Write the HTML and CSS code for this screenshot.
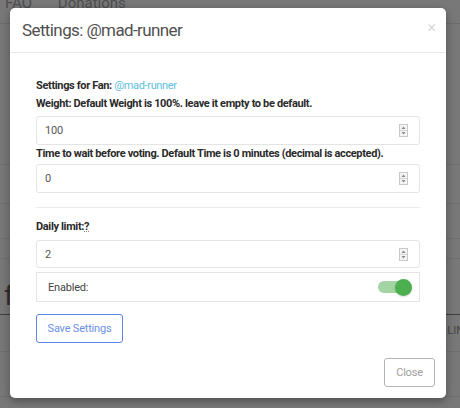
FILE: index.html
```html
<!doctype html>
<html>
<head>
	<title>Settings</title>
	<link rel="stylesheet" href="styles.css">
</head>
<body>

	<div class="page">
		<div class="nav">
			<span>FAQ</span>
			<span>Donations</span>
		</div>
		<div class="row r1"></div>
		<div class="row r2"></div>
		<div class="row r3"></div>
		<div class="row r4"></div>
		<div class="row r5"><span class="big">f</span></div>
		<div class="row r6"><span class="side">Y LIN</span></div>
		<div class="row r7"></div>
	</div>

	<div class="modal">
		<div class="modal-header">
			<h4 class="modal-title">Settings: @mad-runner</h4>
			<span class="close">&times;</span>
		</div>

		<div class="modal-body">
			<div class="lbl">Settings for Fan: <a class="fan" href="#">@mad-runner</a></div>
			<div class="lbl">Weight: Default Weight is 100%. leave it empty to be default.</div>
			<div class="field f1">
				<input type="text" value="100">
				<svg class="spin" width="9" height="13" viewBox="0 0 9 13">
					<rect x="0.5" y="0.5" width="8" height="12" fill="#f4f4f4" stroke="#c9c9c9"/>
					<line x1="1" y1="6.5" x2="8" y2="6.5" stroke="#d6d6d6"/>
					<path d="M4.5 2.5 L6.5 5 L2.5 5 Z" fill="#8a8a8a"/>
					<path d="M4.5 10.5 L6.5 8 L2.5 8 Z" fill="#8a8a8a"/>
				</svg>
			</div>
			<div class="lbl">Time to wait before voting. Default Time is 0 minutes (decimal is accepted).</div>
			<div class="field f2">
				<input type="text" value="0">
				<svg class="spin" width="9" height="13" viewBox="0 0 9 13">
					<rect x="0.5" y="0.5" width="8" height="12" fill="#f4f4f4" stroke="#c9c9c9"/>
					<line x1="1" y1="6.5" x2="8" y2="6.5" stroke="#d6d6d6"/>
					<path d="M4.5 2.5 L6.5 5 L2.5 5 Z" fill="#8a8a8a"/>
					<path d="M4.5 10.5 L6.5 8 L2.5 8 Z" fill="#8a8a8a"/>
				</svg>
			</div>

			<hr class="sep">

			<div class="lbl daily">Daily limit:<abbr title="How many votes per day">?</abbr></div>
			<div class="field f3">
				<input type="text" value="2">
				<svg class="spin" width="9" height="13" viewBox="0 0 9 13">
					<rect x="0.5" y="0.5" width="8" height="12" fill="#f4f4f4" stroke="#c9c9c9"/>
					<line x1="1" y1="6.5" x2="8" y2="6.5" stroke="#d6d6d6"/>
					<path d="M4.5 2.5 L6.5 5 L2.5 5 Z" fill="#8a8a8a"/>
					<path d="M4.5 10.5 L6.5 8 L2.5 8 Z" fill="#8a8a8a"/>
				</svg>
			</div>
			<div class="toggle-row">
				<span>Enabled:</span>
				<span class="switch"><span class="knob"></span></span>
			</div>

			<button class="btn-save">Save Settings</button>
		</div>

		<div class="modal-footer">
			<button class="btn-close">Close</button>
		</div>
	</div>

</body>
</html>
```

FILE: styles.css
```css
html, body {margin: 0; padding: 0;}
body {font-family: Roboto, "Liberation Sans", Arial, sans-serif; background: #787878; height: 408px; overflow: hidden;}

/* page behind the overlay */
.page {color: #4e4e4e;}
.nav {height: 27px; border-bottom: 1px solid #6c6c6c; font-size: 15px; line-height: 14px; margin-top: -4px; padding-left: 5px;}
.nav span {margin-right: 22px;}
.row {border-bottom: 1px solid #6f6f6f; overflow: hidden;}
.r1 {height: 140px;}
.r2 {height: 38px;}
.r3 {height: 34px;}
.r4 {height: 19px;}
.r5 {height: 55px; border-bottom: 1px solid #3e3e3e;}
.r6 {height: 36px; display: flex; justify-content: flex-end; align-items: center;}
.r7 {height: 44px;}
.big {display: block; font-size: 28px; color: #2e2e2e; padding-left: 4px; line-height: 30px; margin-top: 22px;}
.side {font-size: 11px; color: #444; margin-right: -4px; margin-top: -6px;}

/* modal */
.modal {position: absolute; left: 10px; top: 8px; width: 436px; height: 390px; background: #fff; border-radius: 5px; box-shadow: 0 3px 9px rgba(0,0,0,.35);}
.modal-header {height: 44px; border-bottom: 1px solid #e8e8e8; display: flex; align-items: center; justify-content: space-between; padding: 0 10px 0 12px;}
.modal-title {margin: 0; font-size: 17px; letter-spacing: -0.6px; font-weight: normal; color: #505050;}
.close {font-size: 16px; font-weight: 300; color: #cfcfcf; margin-top: -8px;}

.modal-body {padding: 24px 26px 0;}
.lbl {font-size: 11px; letter-spacing: -0.35px; font-weight: bold; color: #2a2a2a; line-height: 18px;}
.fan {color: #5bc0de; font-weight: normal; text-decoration: none;}
.daily abbr {text-decoration: underline dotted; text-decoration-color: #888; cursor: help;}

.field {display: flex; align-items: center; height: 27px; border: 1px solid #e4e4e4; border-radius: 3px; padding: 0 11px 0 8px; margin-top: 3px;}
.field input {flex: 1; border: none; outline: none; padding: 0; font-family: inherit; font-size: 11px; letter-spacing: -0.2px; color: #555; background: transparent;}
.f1 {margin-top: 3px;}
.f2 {margin-top: 1px;}
.f3 {margin-top: 4px; height: 26px;}
.spin {display: block;}

.sep {border: 0; border-top: 1px solid #ebebeb; margin: 14px 0 10px;}

.toggle-row {display: flex; align-items: center; justify-content: space-between; height: 28px; border: 1px solid #e4e4e4; margin-top: 4px; padding: 0 7px 0 11px; font-size: 11px; letter-spacing: -0.2px; color: #444;}
.switch {display: flex; align-items: center; justify-content: flex-end; width: 34px; height: 12px; border-radius: 6px; background: #a3d5a4;}
.knob {width: 17px; height: 17px; border-radius: 50%; background: #4cb050; box-shadow: 0 1px 2px rgba(0,0,0,.15);}

.btn-save {margin-top: 12px; width: 87px; height: 29px; background: #fff; border: 1.5px solid #5b86e5; border-radius: 3px; color: #6a90e6; font-family: inherit; font-size: 11px; letter-spacing: -0.2px; padding: 0;}

.modal-footer {display: flex; justify-content: flex-end; padding: 15px 11px 0 0;}
.btn-close {width: 51px; height: 29px; background: #fff; border: 1.5px solid #b4b4b4; border-radius: 3px; color: #a0a0a0; font-family: inherit; font-size: 11px; letter-spacing: -0.2px; padding: 0;}
```
